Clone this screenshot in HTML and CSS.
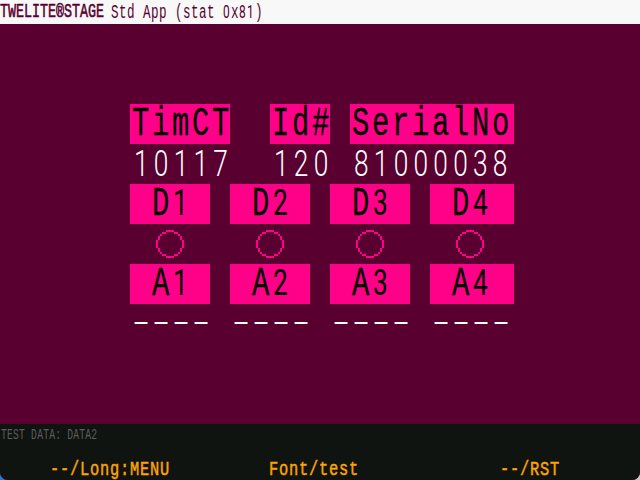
FILE: index.html
```html
<!DOCTYPE html>
<html lang="en">
<head>
<meta charset="utf-8">
<title>TWELITE STAGE</title>
<link rel="stylesheet" href="styles.css">
</head>
<body>
<svg width="0" height="0" class="defs"><defs><path id="ring" d="M5 0h4v1h-4zM3 1h2v1h-2zM9 1h2v1h-2zM2 2h1v1h-1zM11 2h1v1h-1zM1 3h1v2h-1zM12 3h1v2h-1zM0 5h1v4h-1zM13 5h1v4h-1zM1 9h1v2h-1zM12 9h1v2h-1zM2 11h1v1h-1zM11 11h1v1h-1zM3 12h2v1h-2zM9 12h2v1h-2zM5 13h4v1h-4z"/></defs></svg>
<div class="screen">
  <header class="bar"><span class="brand">TWELITE®STAGE</span><span class="app">Std App (stat <i>0</i>x<i>81</i>)</span></header>
  <main class="panel">
    <div class="row ids">
      <div class="tag"><span class="big">TimCT</span></div>
      <div class="tag"><span class="big">Id#</span></div>
      <div class="tag"><span class="big">SerialNo</span></div>
      <div class="val"><span class="num">10117</span></div>
      <div class="val"><span class="num">120</span></div>
      <div class="val"><span class="num">81000038</span></div>
    </div>
    <div class="row ports">
      <div class="tag in"><span class="big">D</span><span class="num">1</span></div>
      <div class="tag in"><span class="big">D</span><span class="num">2</span></div>
      <div class="tag in"><span class="big">D</span><span class="num">3</span></div>
      <div class="tag in last"><span class="big">D</span><span class="num">4</span></div>
      <div class="io"><svg viewBox="0 0 14 14"><use href="#ring"/></svg></div>
      <div class="io"><svg viewBox="0 0 14 14"><use href="#ring"/></svg></div>
      <div class="io"><svg viewBox="0 0 14 14"><use href="#ring"/></svg></div>
      <div class="io"><svg viewBox="0 0 14 14"><use href="#ring"/></svg></div>
      <div class="tag in"><span class="big">A</span><span class="num">1</span></div>
      <div class="tag in"><span class="big">A</span><span class="num">2</span></div>
      <div class="tag in"><span class="big">A</span><span class="num">3</span></div>
      <div class="tag in last"><span class="big">A</span><span class="num">4</span></div>
      <div class="val"><span class="dash">----</span></div>
      <div class="val"><span class="dash">----</span></div>
      <div class="val"><span class="dash">----</span></div>
      <div class="val"><span class="dash">----</span></div>
    </div>
  </main>
  <footer class="foot">
    <div class="log"><span>TEST DATA: DATA2</span></div>
    <div class="keys">
      <div class="key"><span>--/Long:MENU</span></div>
      <div class="key"><span>Font/test</span></div>
      <div class="key"><span>--/RST</span></div>
    </div>
  </footer>
</div>
</body>
</html>
```
FILE: styles.css
```css
* { box-sizing: border-box; }
body { margin: 0; background: linear-gradient(90deg, #2878c8 50%, #c8c8c4 50%); font-family: "Liberation Mono", monospace; }
.defs { display: block; position: absolute; }
.screen { width: 640px; height: 480px; overflow: hidden; display: flex; flex-direction: column; background: #5a0030; border-radius: 0 0 8px 8px; }
span { display: block; white-space: pre; transform-origin: 0 0; }
.bar { height: 24px; background: #f8f8f8; color: #5a0030; display: flex; font-size: 20px; line-height: 24px; flex: none; }
.brand { width: 111px; transform: scaleX(.667); -webkit-text-stroke: .6px #5a0030; }
.app { transform: scaleX(.63); letter-spacing: .7px; }
.app i { font: 400 19px/24px Roboto, sans-serif; letter-spacing: 2.03px; }
.panel { flex: 1; padding: 80px 0 0 130px; }
.row { display: grid; grid-auto-rows: 40px; }
.ids { grid-template-columns: 100px 60px 164px; justify-content: start; }
.ids > :nth-child(3n+2) { margin-left: 40px; margin-right: -40px; }
.ids > :nth-child(3n) { margin-left: 60px; margin-right: -60px; }
.ports { grid-template-columns: repeat(4, 80px); column-gap: 20px; justify-content: start; }
.ids { column-gap: 0; }
.tag { background: #ff0088; color: #000; display: flex; }
.in { padding-left: 20px; }
.last { margin-right: -4px; }
.big { width: 20px; height: 40px; font-size: 40px; line-height: 40px; letter-spacing: 3.78px; transform: translate(2px, 1px) scaleX(.72); -webkit-text-stroke: .3px #000; }
.num { width: 20px; height: 40px; font: 300 36.5px/40px Roboto, sans-serif; letter-spacing: 7.29px; transform: translate(4px, 0) scaleX(.72); }
.tag .num { font-weight: 400; transform: translate(3px, -1.5px) scaleX(.72); }
.val { color: #fff; }
.dash { height: 40px; font-size: 39px; line-height: 40px; letter-spacing: -6.74px; transform-origin: 0 19px; transform: translateX(-3px) scale(1.2, .65); }
.io { display: flex; align-items: center; justify-content: center; }
.io svg { width: 28px; height: 28px; fill: #ff0088; shape-rendering: crispEdges; }
.foot { height: 56px; background: #101410; flex: none; }
.log { height: 34px; color: #5c5c5c; font-size: 14px; line-height: 22px; padding-left: 1px; }
.log span { transform: scaleX(.69); letter-spacing: .33px; }
.keys { display: grid; grid-template-columns: 219px 231px 1fr; padding-left: 50px; color: #ffa500; font-size: 21px; line-height: 22px; }
.key { height: 22px; }
.key span { height: 22px; transform: translateY(1px) scaleX(.73); letter-spacing: 1.1px; -webkit-text-stroke: .5px #ffa500; }
```
